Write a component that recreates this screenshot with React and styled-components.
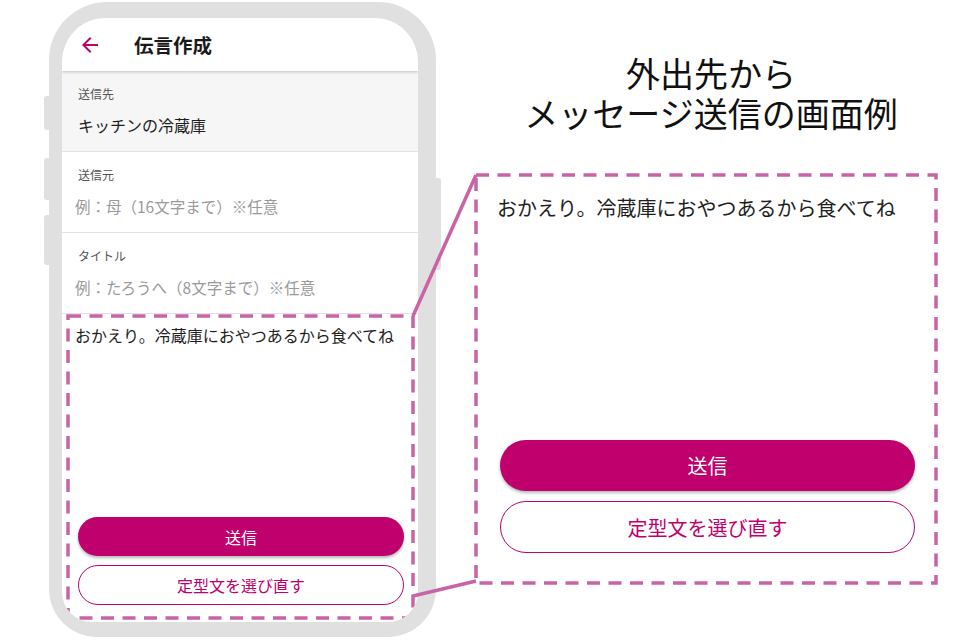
import React from 'react';
import styled, {createGlobalStyle} from 'styled-components';

const MAGENTA = '#bf006d';
const DASH = '#c864a6';

const GlobalStyle = createGlobalStyle`
    body {
        margin: 0;
        background: #fff;
        font-family: "Noto Sans CJK JP", "Noto Sans", sans-serif;
        color: #1e1e1e;
    }
`

const Canvas = styled.div`
    position: relative;
    width: 960px;
    height: 640px;
    display: flex;
    overflow: hidden;
    background: #fff;
`
const PhoneColumn = styled.div`
    padding: 2px 0 0 49px;
`
const Phone = styled.div`
    position: relative;
    width: 387px;
    height: 635px;
    box-sizing: border-box;
    padding: 16px 18px 15px 13px;
    background: #e0e0e0;
    border-radius: 58px 58px 48px 48px;
`
const SideKey = styled.div`
    position: absolute;
    top: ${p => p.$top}px;
    height: ${p => p.$h}px;
    width: 8px;
    background: #e0e0e0;
    border-radius: 3px;
    ${p => p.$right ? 'right: -5px;' : 'left: -5px;'}
`
const Screen = styled.div`
    width: 100%;
    height: 100%;
    display: flex;
    flex-direction: column;
    background: #fff;
    border-radius: 44px 44px 30px 30px;
    overflow: hidden;
`
const Header = styled.div`
    position: relative;
    z-index: 1;
    flex-shrink: 0;
    height: 53px;
    display: flex;
    align-items: center;
    padding-left: 16px;
    background: #fff;
    box-shadow: 0 1px 3px rgba(0, 0, 0, 0.22);
`
const HeaderTitle = styled.h1`
    margin: 0 0 0 32px;
    font-size: 19.5px;
    font-weight: 700;
    color: #1a1a1a;
    line-height: 1;
`
const Field = styled.div`
    height: 81px;
    padding: 15px 16px 0;
    box-sizing: border-box;
    border-bottom: 1px solid #e2e2e2;
    background: ${p => p.$muted ? '#f6f6f6' : '#fff'};
    flex-shrink: 0;
`
const Label = styled.div`
    font-size: 12px;
    line-height: 16px;
    color: #555;
`
const Value = styled.div`
    margin-top: 12px;
    font-size: 16px;
    line-height: 22px;
    color: #1e1e1e;
`
const Placeholder = styled.div`
    margin: 12px 0 0 -3px;
    font-size: 15.5px;
    line-height: 22px;
    color: #9a9a9a;
`
const MessageArea = styled.div`
    position: relative;
    flex: 1;
    display: flex;
    flex-direction: column;
    padding: 10px 14px 17px 16px;
`
const MessageText = styled.p`
    margin: 0 0 0 -3px;
    font-size: ${p => p.$big ? '20px' : '16px'};
    line-height: ${p => p.$big ? '28px' : '22px'};
    color: #1e1e1e;
    white-space: nowrap;
`
const ButtonStack = styled.div`
    margin-top: auto;
    display: flex;
    flex-direction: column;
    gap: ${p => p.$big ? '10px' : '9px'};
`
const Button = styled.button`
    display: flex;
    align-items: center;
    justify-content: center;
    width: 100%;
    height: ${p => p.$big ? (p.$outline ? 52 : 51) : (p.$outline ? 40 : 39)}px;
    padding: 0;
    border-radius: 999px;
    font-family: inherit;
    font-size: ${p => p.$big ? '20px' : '16px'};
    border: ${p => p.$outline ? `1.5px solid ${MAGENTA}` : 'none'};
    background: ${p => p.$outline ? '#fff' : MAGENTA};
    color: ${p => p.$outline ? MAGENTA : '#fff'};
    box-shadow: ${p => p.$outline ? 'none' : '0 2px 3px rgba(40, 60, 50, 0.35)'};
`
const RightColumn = styled.div`
    margin-left: 40px;
    width: 460px;
    display: flex;
    flex-direction: column;
`
const Heading = styled.h2`
    margin: 53px 0 0;
    padding-left: 10px;
    font-size: 34px;
    line-height: 40px;
    font-weight: 400;
    text-align: center;
    color: #111;
`
const Callout = styled.div`
    position: relative;
    margin-top: 42px;
    height: 408px;
    box-sizing: border-box;
    display: flex;
    flex-direction: column;
    padding: 19px 21px 30px 24px;
`
const FrameBox = styled.div`
    position: absolute;
    top: ${p => p.$t}px;
    right: ${p => p.$r}px;
    bottom: ${p => p.$b}px;
    left: ${p => p.$l}px;
    pointer-events: none;
`
const Connectors = styled.svg`
    position: absolute;
    top: 0;
    left: 0;
    pointer-events: none;
`

const DashedFrame = ({t = 0, r = 0, b = 0, l = 0}) => (
    <FrameBox $t={t} $r={r} $b={b} $l={l}>
        <svg width="100%" height="100%" style={{overflow: 'visible', display: 'block'}}>
            <rect x="0" y="0" width="100%" height="100%" fill="none"
                stroke={DASH} strokeWidth="3.5" strokeDasharray="13 8.5" />
        </svg>
    </FrameBox>
)

const BackArrow = () => (
    <svg width="24" height="24" viewBox="0 0 24 24">
        <path fill={MAGENTA} d="M20 11H7.83l5.59-5.59L12 4l-8 8 8 8 1.41-1.41L7.83 13H20v-2z" />
    </svg>
)

const MESSAGE = 'おかえり。冷蔵庫におやつあるから食べてね';

const App = () => {
    return (
        <Canvas lang="ja">
            <GlobalStyle />
            <PhoneColumn>
                <Phone>
                    <SideKey $top={94} $h={34} />
                    <SideKey $top={156} $h={42} />
                    <SideKey $top={213} $h={50} />
                    <SideKey $right $top={176} $h={92} />
                    <Screen>
                        <Header>
                            <BackArrow />
                            <HeaderTitle>伝言作成</HeaderTitle>
                        </Header>
                        <Field $muted>
                            <Label>送信先</Label>
                            <Value>キッチンの冷蔵庫</Value>
                        </Field>
                        <Field>
                            <Label>送信元</Label>
                            <Placeholder>例：母（16文字まで）※任意</Placeholder>
                        </Field>
                        <Field>
                            <Label>タイトル</Label>
                            <Placeholder>例：たろうへ（8文字まで）※任意</Placeholder>
                        </Field>
                        <MessageArea>
                            <MessageText>{MESSAGE}</MessageText>
                            <ButtonStack>
                                <Button>送信</Button>
                                <Button $outline>定型文を選び直す</Button>
                            </ButtonStack>
                            <DashedFrame t={2} r={5} b={4} l={6} />
                        </MessageArea>
                    </Screen>
                </Phone>
            </PhoneColumn>
            <RightColumn>
                <Heading>外出先から<br />メッセージ送信の画面例</Heading>
                <Callout>
                    <MessageText $big>{MESSAGE}</MessageText>
                    <ButtonStack $big>
                        <Button $big>送信</Button>
                        <Button $big $outline>定型文を選び直す</Button>
                    </ButtonStack>
                    <DashedFrame />
                </Callout>
            </RightColumn>
            <Connectors width="960" height="640">
                <line x1="413" y1="316" x2="476" y2="175" stroke={DASH} strokeWidth="3.5" />
                <line x1="413" y1="596" x2="476" y2="581" stroke={DASH} strokeWidth="3.5" />
            </Connectors>
        </Canvas>
    );
};

export default App;
